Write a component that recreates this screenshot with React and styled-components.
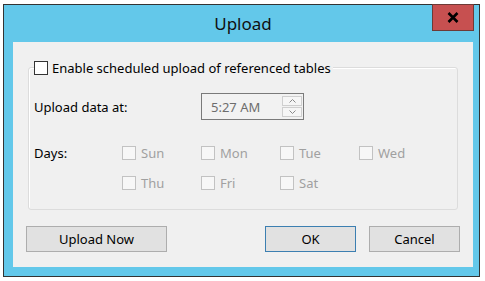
import React from 'react';
import styled, { createGlobalStyle } from 'styled-components';

const GlobalStyle = createGlobalStyle`
  html, body {
    margin: 0;
    padding: 0;
    background: #ffffff;
  }
  body {
    font-family: "Noto Sans", "Open Sans", "Liberation Sans", sans-serif;
    font-size: 13px;
    color: #000;
  }
`;

const Page = styled.div`
  width: 485px;
  height: 281px;
  padding: 4px 0 0 3px;
  box-sizing: border-box;
  overflow: hidden;
`;

const Window = styled.div`
  position: relative;
  width: 477px;
  height: 273px;
  box-sizing: border-box;
  border: 1px solid #333333;
  background: #63c8ea;
  padding: 0 6px 9px 9px;
  display: flex;
  flex-direction: column;
`;

const TitleBar = styled.div`
  height: 37px;
  display: flex;
  align-items: center;
  justify-content: center;
`;

const Title = styled.div`
  font-size: 17px;
  color: #101010;
  margin-top: -1px;
`;

const CloseButton = styled.div`
  position: absolute;
  top: -1px;
  right: 5px;
  width: 42px;
  height: 27px;
  box-sizing: border-box;
  background: #c75050;
  border: 1px solid #6e3a36;
  display: flex;
  align-items: center;
  justify-content: center;
`;

const Body = styled.div`
  flex: 1;
  background: #f0f0f0;
  display: flex;
  flex-direction: column;
`;

const Group = styled.div`
  position: relative;
  margin: 25px 15px 0 15px;
  height: 143px;
  box-sizing: border-box;
  border: 1px solid #dcdcdc;
  border-radius: 3px;
  box-shadow: inset 1px 1px 0 #ffffff;
  padding: 25px 0 0 5px;
`;

const Legend = styled.label`
  position: absolute;
  top: -8px;
  left: 5px;
  display: flex;
  align-items: center;
  gap: 4px;
  height: 15px;
  padding-right: 2px;
  background: #f0f0f0;
`;

const Box = styled.span`
  width: 14px;
  height: 14px;
  box-sizing: border-box;
  border: 1px solid ${(p) => (p.$disabled ? '#c2c2c2' : '#333333')};
  background: ${(p) => (p.$disabled ? '#f7f7f7' : '#ffffff')};
  flex: none;
`;

const Row = styled.div`
  display: flex;
  align-items: ${(p) => p.$align || 'center'};
  margin-top: ${(p) => p.$top || 0}px;
`;

const Label = styled.div`
  width: ${(p) => p.$width}px;
  flex: none;
  line-height: 16px;
`;

const TimeBox = styled.div`
  width: 103px;
  height: 27px;
  box-sizing: border-box;
  border: 1px solid #7a7a7a;
  background: #f2f2f2;
  display: flex;
  align-items: center;
  padding: 0 1px 0 9px;
  color: #6d6d6d;
`;

const TimeText = styled.span`
  flex: 1;
`;

const Spinner = styled.div`
  display: flex;
  flex-direction: column;
  gap: 1px;
  width: 20px;
`;

const SpinPart = styled.div`
  height: 10px;
  box-sizing: border-box;
  border: 1px solid #cfcfcf;
  background: #f6f6f6;
  display: flex;
  align-items: center;
  justify-content: center;
`;

const DayGrid = styled.div`
  display: grid;
  grid-template-columns: repeat(4, 79px);
  row-gap: 14px;
`;

const Day = styled.div`
  display: flex;
  align-items: center;
  gap: 5px;
  height: 16px;
  color: #a0a0a0;
`;

const ButtonRow = styled.div`
  display: flex;
  justify-content: space-between;
  margin-top: 16px;
  padding: 0 13px;
`;

const ButtonGroup = styled.div`
  display: flex;
  gap: 13px;
`;

const Button = styled.div`
  width: ${(p) => p.$width}px;
  height: 26px;
  box-sizing: border-box;
  border: 1px solid ${(p) => (p.$default ? '#3c7fb1' : '#adadad')};
  background: #e1e1e1;
  display: flex;
  align-items: center;
  justify-content: center;
`;

const Chevron = ({ up }) => (
  <svg width="7" height="4" viewBox="0 0 7 4">
    <path
      d={up ? 'M0.5 3.5 L3.5 0.5 L6.5 3.5' : 'M0.5 0.5 L3.5 3.5 L6.5 0.5'}
      fill="none"
      stroke="#8a8a8a"
      strokeWidth="1"
    />
  </svg>
);

const days = ['Sun', 'Mon', 'Tue', 'Wed', 'Thu', 'Fri', 'Sat'];

export default function App() {
  return (
    <Page>
      <GlobalStyle />
      <Window>
        <TitleBar>
          <Title>Upload</Title>
          <CloseButton>
            <svg width="12" height="11" viewBox="0 0 12 11">
              <path d="M1.5 1 L10.5 10 M10.5 1 L1.5 10" stroke="#000" strokeWidth="2.6" />
            </svg>
          </CloseButton>
        </TitleBar>
        <Body>
          <Group>
            <Legend>
              <Box />
              <span>Enable scheduled upload of referenced tables</span>
            </Legend>
            <Row>
              <Label $width={167}>Upload data at:</Label>
              <TimeBox>
                <TimeText>5:27 AM</TimeText>
                <Spinner>
                  <SpinPart><Chevron up /></SpinPart>
                  <SpinPart><Chevron /></SpinPart>
                </Spinner>
              </TimeBox>
            </Row>
            <Row $align="flex-start" $top={25}>
              <Label $width={88}>Days:</Label>
              <DayGrid>
                {days.map((d) => (
                  <Day key={d}>
                    <Box $disabled />
                    <span>{d}</span>
                  </Day>
                ))}
              </DayGrid>
            </Row>
          </Group>
          <ButtonRow>
            <Button $width={141}>Upload Now</Button>
            <ButtonGroup>
              <Button $width={91} $default>OK</Button>
              <Button $width={91}>Cancel</Button>
            </ButtonGroup>
          </ButtonRow>
        </Body>
      </Window>
    </Page>
  );
}
